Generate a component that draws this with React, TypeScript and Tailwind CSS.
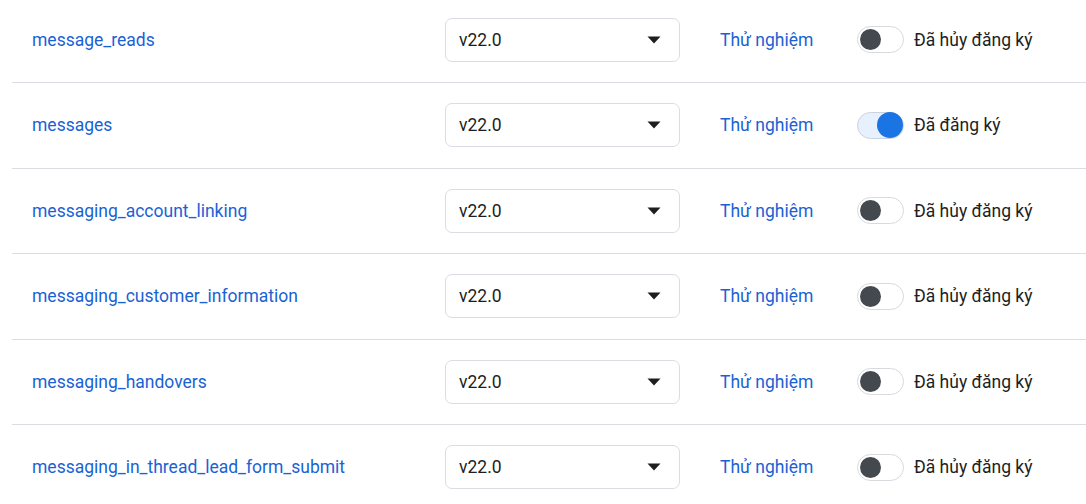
const rows = [
  { name: "message_reads", on: false },
  { name: "messages", on: true },
  { name: "messaging_account_linking", on: false },
  { name: "messaging_customer_information", on: false },
  { name: "messaging_handovers", on: false },
  { name: "messaging_in_thread_lead_form_submit", on: false },
];

const Toggle = ({ on }: { on: boolean }) =>
  on ? (
    <div className="flex h-[27px] w-[47px] items-center justify-end rounded-full border border-[#c9d3e0] bg-[#e7f0fd]">
      <div className="h-[26px] w-[26px] rounded-full bg-[#1b74e4]" />
    </div>
  ) : (
    <div className="flex h-[27px] w-[47px] items-center rounded-full border border-[#d6d9dd] bg-white pl-[2px]">
      <div className="h-[21px] w-[21px] rounded-full bg-[#444950]" />
    </div>
  );

export default function App() {
  return (
    <div
      className="h-[504px] w-[1086px] overflow-hidden bg-white pl-3"
      style={{ fontFamily: "Roboto, 'Liberation Sans', sans-serif" }}
    >
      <div className="-mt-[2.5px]">
        {rows.map((r) => (
          <div
            key={r.name}
            className="flex h-[85.5px] items-center border-b border-[#dadde1] text-[17.5px] leading-6"
          >
            <div className="w-[433px] pl-5 text-[#1a62d4]">{r.name}</div>
            <div className="flex h-[44px] w-[235px] items-center justify-between rounded-[7px] border border-[#dadde1] pl-[13px] pr-[18px] text-[#1c1e21]">
              <span>v22.0</span>
              <svg width="14" height="8" viewBox="0 0 14 8">
                <path d="M0.5 0.5 H13.5 L7 7.5 Z" fill="#1c1e21" />
              </svg>
            </div>
            <div className="ml-10 w-[137px] text-[#1a62d4]">Thử nghiệm</div>
            <Toggle on={r.on} />
            <div className="ml-[10px] text-[#1c1e21]">
              {r.on ? "Đã đăng ký" : "Đã hủy đăng ký"}
            </div>
          </div>
        ))}
      </div>
    </div>
  );
}
